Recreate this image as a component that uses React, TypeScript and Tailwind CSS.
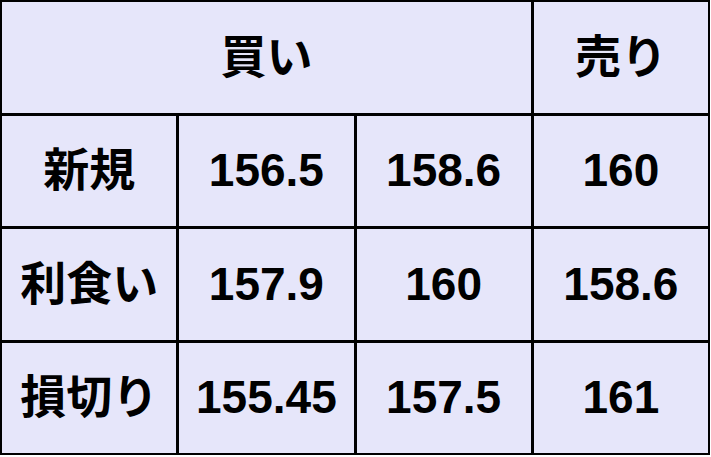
const rows = [
  ['新規', '156.5', '158.6', '160'],
  ['利食い', '157.9', '160', '158.6'],
  ['損切り', '155.45', '157.5', '161'],
];

export default function App() {
  return (
    <div className="w-[711px] h-[457px] bg-white">
      <div className="grid grid-cols-4 grid-rows-4 gap-[3px] w-[710px] h-[455px] bg-black border-2 border-black font-['Liberation_Sans','Noto_Sans_CJK_JP',sans-serif] font-bold text-[46px] text-black">
        {/* Header */}
        <div className="col-span-3 flex items-center justify-center bg-[#E6E6FA]">買い</div>
        <div className="flex items-center justify-center bg-[#E6E6FA]">売り</div>

        {rows.map((row) =>
          row.map((cell, i) => (
            <div key={row[0] + i} className="flex items-center justify-center bg-[#E6E6FA]">
              {cell}
            </div>
          ))
        )}
      </div>
    </div>
  );
}
